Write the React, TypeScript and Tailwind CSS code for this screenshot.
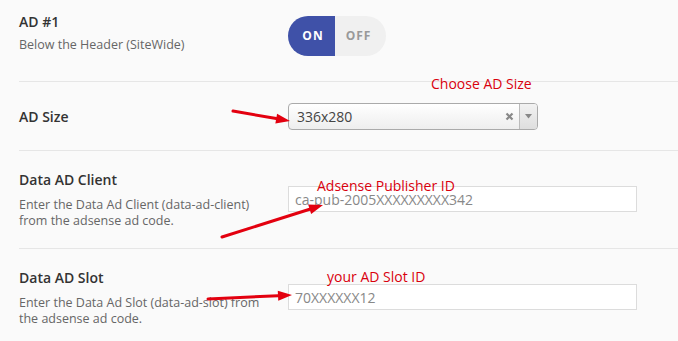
import React from "react";

type Pt = [number, number];

// builds a line + filled head for the red annotation arrows
function Arrow({ from, to }: { from: Pt; to: Pt }) {
  const [x1, y1] = from;
  const [x2, y2] = to;
  const a = Math.atan2(y2 - y1, x2 - x1);
  const len = 14;
  const half = 5;
  const bx = x2 - Math.cos(a) * len;
  const by = y2 - Math.sin(a) * len;
  const nx = -Math.sin(a) * half;
  const ny = Math.cos(a) * half;
  const head = `${x2},${y2} ${bx + nx},${by + ny} ${bx - nx},${by - ny}`;
  return (
    <g>
      <line x1={x1} y1={y1} x2={bx} y2={by} stroke="#e3000f" strokeWidth={3} strokeLinecap="round" />
      <polygon points={head} fill="#e3000f" />
    </g>
  );
}

function Row({
  title,
  desc,
  className,
  children,
}: {
  title: string;
  desc: React.ReactNode;
  className: string;
  children: React.ReactNode;
}) {
  return (
    <div className={`flex pt-[19px] ${className}`}>
      <div className="w-[269px] shrink-0">
        <div className="text-[14px] leading-5 font-semibold text-[#333]">{title}</div>
        <div className="mt-[7px] text-[12.5px] leading-[16px] text-[#666]">{desc}</div>
      </div>
      <div className="pt-[16px]">{children}</div>
    </div>
  );
}

export default function App() {
  return (
    <div
      className="relative w-[678px] h-[341px] overflow-hidden bg-[#fafafa]"
      style={{ fontFamily: '"Open Sans", "Noto Sans", sans-serif' }}
    >
      <div className="pl-[19px]">
        {/* AD #1 toggle */}
        <div className="flex h-[82px] border-b border-[#e6e6e6]">
          <div className="w-[269px] shrink-0 pt-[12px]">
            <div className="text-[14px] leading-5 font-semibold text-[#333]">AD #1</div>
            <div className="mt-[3px] text-[12.5px] leading-5 text-[#666]">Below the Header (SiteWide)</div>
          </div>
          <div className="pt-[16px]">
            <div className="flex h-[40px] w-[98px] rounded-full overflow-hidden">
              <div className="flex w-[47px] items-center justify-center bg-[#3f51a8] text-[12px] font-bold tracking-[1px] text-white pl-[3px]">
                ON
              </div>
              <div className="flex flex-1 items-center justify-center bg-[#f0f0f0] text-[12px] font-bold tracking-[1px] text-[#999] pr-[4px]">
                OFF
              </div>
            </div>
          </div>
        </div>

        {/* AD size select */}
        <div className="flex h-[69px] items-center border-b border-[#e6e6e6]">
          <div className="w-[269px] shrink-0 pt-[1px] text-[14px] leading-5 font-semibold text-[#333]">AD Size</div>
          <div className="flex h-[27px] w-[250px] items-stretch rounded-[4px] border border-[#aaa] bg-gradient-to-b from-white to-[#eeeeee]">
            <div className="flex flex-1 items-center pl-[8px] text-[14px] text-[#444]">336x280</div>
            <div className="flex w-[20px] items-center justify-center text-[#888]">
              <svg width="9" height="9" viewBox="0 0 9 9">
                <path d="M1.5 1.5 L7.5 7.5 M7.5 1.5 L1.5 7.5" stroke="#888" strokeWidth="2.2" />
              </svg>
            </div>
            <div className="flex w-[18px] items-center justify-center border-l border-[#bbb] bg-gradient-to-b from-[#f2f2f2] to-[#dedede] rounded-r-[3px]">
              <svg width="7" height="5" viewBox="0 0 7 5">
                <path d="M0 0 H7 L3.5 4.5 Z" fill="#888" />
              </svg>
            </div>
          </div>
        </div>

        <Row
          className="h-[98px] border-b border-[#e6e6e6]"
          title="Data AD Client"
          desc={
            <>
              Enter the Data Ad Client (data-ad-client)
              <br />
              from the adsense ad code.
            </>
          }
        >
          <div className="flex h-[26px] w-[349px] items-center border border-[#dcdcdc] bg-white pl-[6px] text-[14px] text-[#888]">
            ca-pub-2005XXXXXXXXX342
          </div>
        </Row>

        <Row
          className=""
          title="Data AD Slot"
          desc={
            <>
              Enter the Data Ad Slot (data-ad-slot) from
              <br />
              the adsense ad code.
            </>
          }
        >
          <div className="flex h-[26px] w-[349px] items-center border border-[#dcdcdc] bg-white pl-[6px] text-[14px] text-[#888]">
            70XXXXXX12
          </div>
        </Row>
      </div>

      {/* annotations */}
      <div className="absolute left-[431px] top-[74px] text-[14px] leading-5 text-[#d9000d]">Choose AD Size</div>
      <div className="absolute left-[317px] top-[176px] text-[14px] leading-5 text-[#d9000d]">Adsense Publisher ID</div>
      <div className="absolute left-[327px] top-[267px] text-[14px] leading-5 text-[#d9000d]">your AD Slot ID</div>
      <svg className="absolute left-0 top-0 pointer-events-none" width="678" height="341">
        <Arrow from={[233, 111]} to={[290, 121]} />
        <Arrow from={[222, 237]} to={[323, 205]} />
        <Arrow from={[208, 299]} to={[292, 295]} />
      </svg>
    </div>
  );
}
